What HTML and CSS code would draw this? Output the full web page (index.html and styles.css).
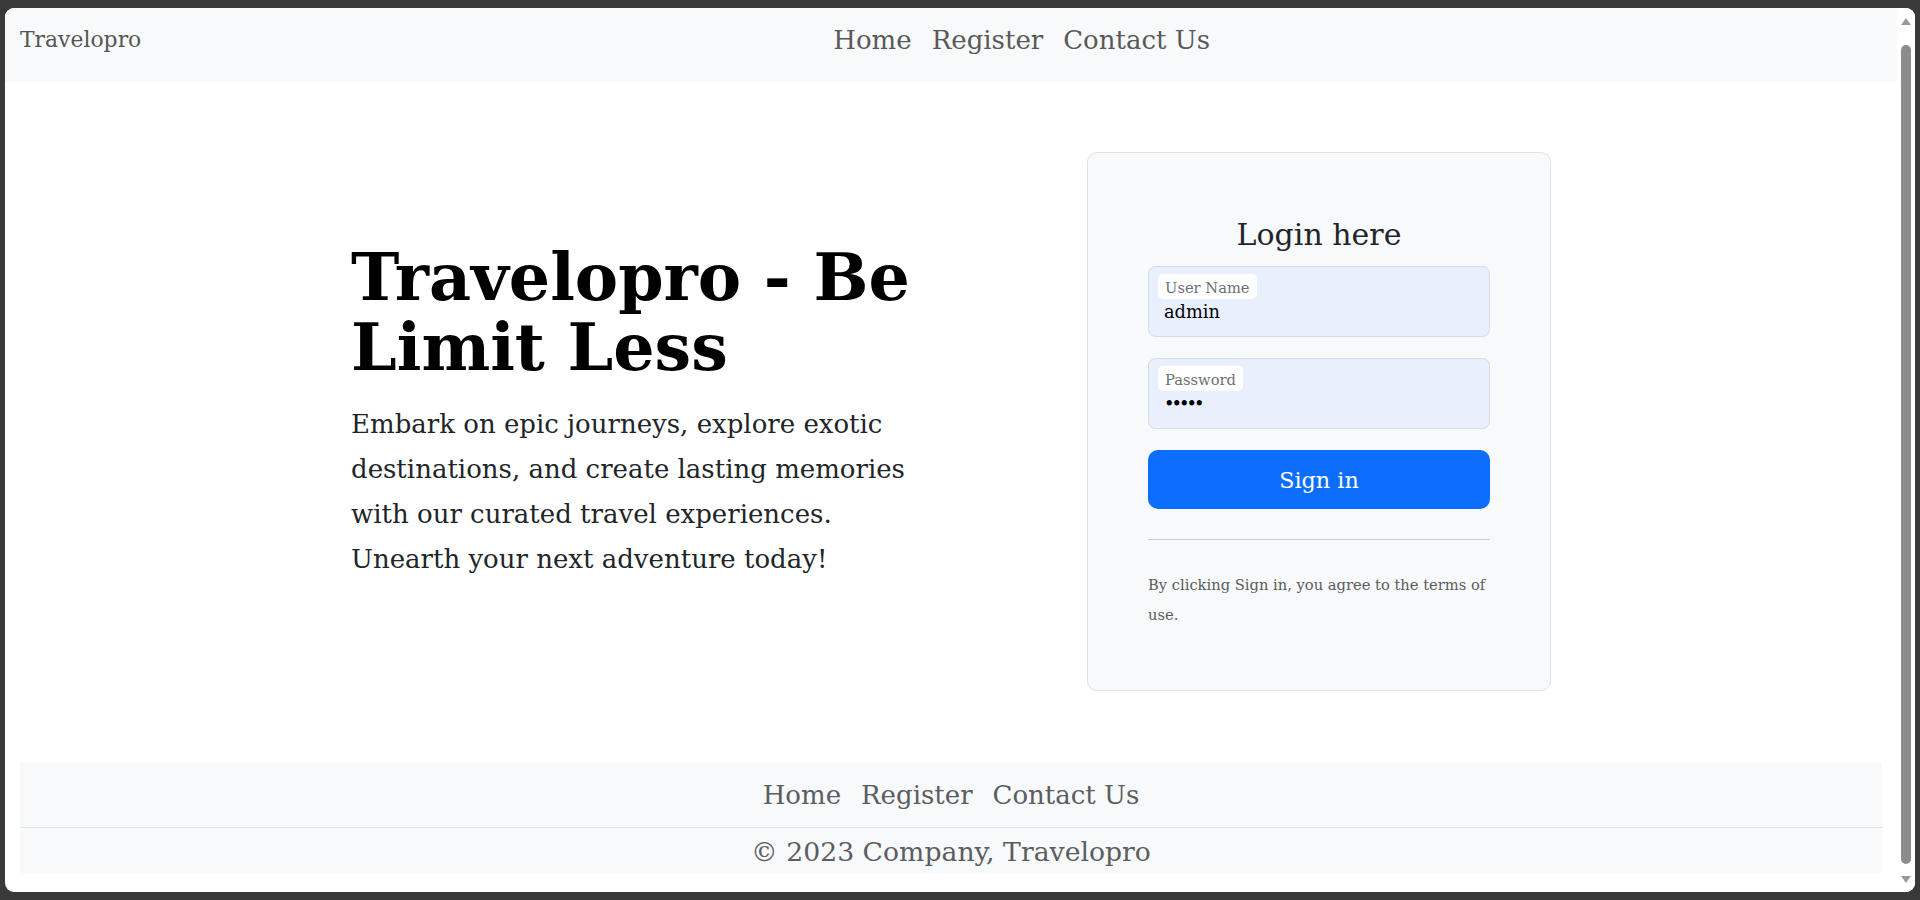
FILE: index.html
```html
<!DOCTYPE html>
<html lang="en">
<head>
<meta charset="utf-8">
<title>Travelopro - Login</title>
<link rel="stylesheet" href="styles.css">
</head>
<body>
<div class="window">
  <div class="page">
    <header class="navbar">
      <a class="brand" href="#">Travelopro</a>
      <nav class="nav-main">
        <a href="#">Home</a>
        <a href="#">Register</a>
        <a href="#">Contact Us</a>
      </nav>
    </header>

    <main class="hero">
      <div class="hero-grid">
        <div class="intro">
          <h1>Travelopro - Be Limit Less</h1>
          <p>Embark on epic journeys, explore exotic destinations, and create lasting memories with our curated travel experiences. Unearth your next adventure today!</p>
        </div>

        <form class="login-card">
          <h2>Login here</h2>
          <div class="field">
            <label for="username">User Name</label>
            <input id="username" type="text" value="admin">
          </div>
          <div class="field">
            <label for="password">Password</label>
            <input id="password" class="password" type="password" value="admin">
          </div>
          <button type="button" class="btn-signin">Sign in</button>
          <hr>
          <p class="terms">By clicking Sign in, you agree to the terms of use.</p>
        </form>
      </div>
    </main>

    <div class="footer-wrap">
      <footer class="footer">
        <nav class="footer-nav">
          <a href="#">Home</a>
          <a href="#">Register</a>
          <a href="#">Contact Us</a>
        </nav>
        <p class="copyright">&copy; 2023 Company, Travelopro</p>
      </footer>
    </div>
  </div>

  <div class="scrollbar">
    <span class="arrow-up"></span>
    <span class="thumb"></span>
    <span class="arrow-down"></span>
  </div>
</div>
</body>
</html>
```

FILE: styles.css
```css
* {
  box-sizing: border-box;
}

html,
body {
  margin: 0;
  height: 100%;
}

body {
  background: #393939;
  padding: 8px 5px;
  font-family: "DejaVu Serif", Georgia, serif;
  overflow: hidden;
}

.window {
  display: flex;
  height: 884px;
  background: #ffffff;
  border-radius: 9px;
  overflow: hidden;
}

.page {
  flex: 1;
  min-width: 0;
  display: flex;
  flex-direction: column;
}

/* ---------- top navbar ---------- */
.navbar {
  flex: none;
  height: 74px;
  background: #f8f9fa;
  display: flex;
  align-items: center;
  padding: 0 15px 10px;
}

.brand {
  color: #555555;
  font-size: 21.9px;
  line-height: 30px;
  text-decoration: none;
  margin-right: 20px;
}

.nav-main {
  flex: 1;
  display: flex;
  justify-content: center;
}

.nav-main a,
.footer-nav a {
  padding: 0 10px;
  font-size: 26px;
  line-height: 45px;
  text-decoration: none;
}

.nav-main a {
  color: #595959;
}

/* ---------- hero ---------- */
.hero {
  flex: none;
  height: 680px;
  padding: 70px 0;
}

.hero-grid {
  width: 1200px;
  margin: 0 auto;
  display: grid;
  grid-template-columns: 676px 464px;
  column-gap: 60px;
  align-items: center;
}

.intro h1 {
  margin: 0 0 20px;
  font-size: 65px;
  line-height: 70px;
  font-weight: 700;
  color: #000000;
}

.intro p {
  margin: 0 0 20px;
  max-width: 580px;
  font-size: 26px;
  line-height: 45px;
  color: #212529;
}

/* ---------- login card ---------- */
.login-card {
  margin: 0;
  background: #f8f9fa;
  border: 1px solid #dee2e6;
  border-radius: 10px;
  padding: 60px;
}

.login-card h2 {
  margin: 0 0 10px;
  font-size: 30px;
  line-height: 43px;
  font-weight: 400;
  text-align: center;
  color: #212529;
}

.field {
  height: 71px;
  margin-bottom: 21px;
  border: 1px solid #d6dce4;
  border-radius: 7.5px;
  background: #e8f0fe;
  padding: 7px 9px 0;
  display: flex;
  flex-direction: column;
  align-items: flex-start;
}

.field label {
  height: 25px;
  line-height: 27px;
  padding: 0 7px;
  background: #ffffff;
  border-radius: 5px;
  font-size: 14.7px;
  color: #6c6f72;
}

.field input {
  display: block;
  width: 100%;
  height: 24px;
  margin: 0;
  padding: 0 6px;
  border: 0;
  background: transparent;
  font-family: "DejaVu Serif", Georgia, serif;
  font-size: 17.8px;
  color: #000000;
  outline: none;
}

.field input.password {
  letter-spacing: -3px;
}

.btn-signin {
  display: block;
  width: 100%;
  height: 59px;
  margin: 0;
  border: 0;
  border-radius: 10px;
  background: #0d6efd;
  color: #ffffff;
  font-family: "DejaVu Serif", Georgia, serif;
  font-size: 22.3px;
  cursor: pointer;
}

.login-card hr {
  margin: 30px 0;
  height: 0;
  border: 0;
  border-top: 1px solid #c6c8ca;
}

.terms {
  margin: 0;
  font-size: 14.7px;
  line-height: 30px;
  color: #585b5e;
}

/* ---------- footer ---------- */
.footer-wrap {
  flex: none;
  padding: 0 15px;
}

.footer {
  background: #f8f9fa;
}

.footer-nav {
  display: flex;
  justify-content: center;
  padding: 11px 0 9px;
  border-bottom: 1px solid #dee2e6;
}

.footer-nav a {
  color: #5a5d61;
}

.copyright {
  margin: 0;
  height: 45px;
  padding-top: 2px;
  line-height: 43px;
  text-align: center;
  font-size: 26.7px;
  color: #5a5d61;
}

/* ---------- scrollbar ---------- */
.scrollbar {
  flex: none;
  width: 18px;
  display: flex;
  flex-direction: column;
  align-items: center;
  padding: 10px 0 9px;
  background: #ffffff;
}

.arrow-up,
.arrow-down {
  flex: none;
  width: 0;
  height: 0;
  border-left: 5px solid transparent;
  border-right: 5px solid transparent;
}

.arrow-up {
  border-bottom: 7px solid #9b9b9b;
}

.arrow-down {
  border-top: 7px solid #9b9b9b;
}

.thumb {
  flex: 1;
  width: 10px;
  margin: 20px 0 12px;
  border-radius: 5px;
  background: #8c8c8c;
}
```
